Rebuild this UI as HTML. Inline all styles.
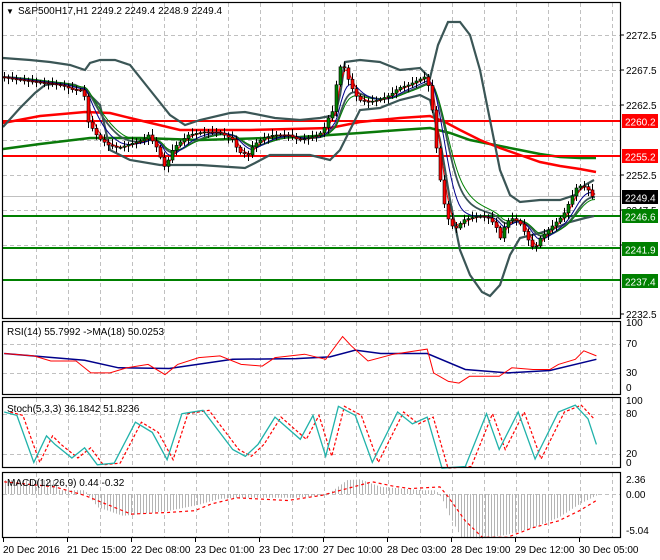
<!DOCTYPE html>
<html><head><meta charset="utf-8">
<style>
html,body{margin:0;padding:0;background:#fff;}
svg{display:block;font-family:"Liberation Sans",sans-serif;}
</style></head>
<body>
<svg id="c" width="660" height="560" xmlns="http://www.w3.org/2000/svg">
<rect width="660" height="560" fill="#fff"/>
<g id="grid" stroke="#c0c0c0" stroke-dasharray="4,3" stroke-width="1"></g>
<g id="main"></g>
<g fill="none" stroke="#000" stroke-width="1.2">
<rect x="2.5" y="2.5" width="618" height="316"/>
<rect x="2.5" y="321.5" width="618" height="73"/>
<rect x="2.5" y="397.5" width="618" height="70"/>
<rect x="2.5" y="472.5" width="618" height="65"/>
</g>
<g id="axes" font-size="10" fill="#000"></g>
<g font-size="10" fill="#000">
<text x="6" y="14" font-size="8">▼</text>
<text x="18" y="14">S&amp;P500H17,H1  2249.2 2249.4 2248.9 2249.4</text>
<text x="7" y="335">RSI(14) 55.7992  -&gt;MA(18) 50.0253</text>
<text x="7" y="412">Stoch(5,3,3) 36.1842 51.8236</text>
<text x="7" y="486">MACD(12,26,9) 0.44 -0.32</text>
</g>
</svg>
<script>
const NS="http://www.w3.org/2000/svg";
function el(p,t,a,txt){const e=document.createElementNS(NS,t);for(const k in a)e.setAttribute(k,a[k]);if(txt!==undefined)e.textContent=txt;p.appendChild(e);return e;}
const g=document.getElementById('grid'),m=document.getElementById('main'),ax=document.getElementById('axes');
for(let x=36;x<620;x+=32){[[3,318],[322,394],[398,467],[473,537]].forEach(r=>el(g,'line',{x1:x+.5,x2:x+.5,y1:r[0],y2:r[1]}));}
[35,70,105,140,175,210,245,279].forEach(y=>el(g,'line',{x1:3,x2:620,y1:y+.5,y2:y+.5}));
[344,373].forEach(y=>el(g,'line',{x1:3,x2:620,y1:y+.5,y2:y+.5}));
[414,454].forEach(y=>el(g,'line',{x1:3,x2:620,y1:y+.5,y2:y+.5}));
el(g,'line',{x1:3,x2:620,y1:494.5,y2:494.5});
function interp(pts,x){for(let i=0;i<pts.length-1;i++){if(x>=pts[i][0]&&x<=pts[i+1][0]){const t=(x-pts[i][0])/(pts[i+1][0]-pts[i][0]||1);return pts[i][1]+t*(pts[i+1][1]-pts[i][1]);}}return pts[pts.length-1][1];}
function pl(p,pts,a){a.points=pts.map(q=>q.join(',')).join(' ');a.fill='none';return el(p,'polyline',a);}
function Z(pts,oy){return pts.map(q=>[+(q[0]/2.364).toFixed(1),+(oy+q[1]/2.94).toFixed(1)]);}
const price=[[3,77],[15,79],[30,81],[45,83],[55,84],[65,86],[75,90],[85,90],[90,122],[100,138],[110,145],[120,148],[135,143],[145,140],[150,135],[160,150],[165,168],[170,160],[175,148],[190,135],[205,132],[220,132],[235,140],[240,152],[250,155],[255,145],[265,138],[275,135],[290,135],[300,140],[310,138],[320,135],[325,130],[330,118],[335,110],[340,68],[345,65],[352,85],[360,100],[370,102],[380,100],[392,95],[400,88],[410,85],[420,80],[428,76],[433,100],[437,140],[442,180],[447,210],[452,225],[458,228],[465,220],[472,218],[480,216],[490,218],[497,225],[502,238],[508,222],[515,218],[523,225],[530,240],[536,250],[542,238],[550,230],[558,222],[565,215],[572,200],[578,188],[584,185],[590,190],[595,198]];
function lag(pts,k){const out=[];let v=pts[0][1];for(let x=3;x<=596;x+=2){const y=interp(pts,x);v=v+(y-v)*k;out.push([x,+v.toFixed(1)]);}return out;}
const up=[[3,58],[30,60],[50,62],[70,65],[85,70],[90,63],[100,60],[115,60],[130,65],[150,90],[170,115],[185,125],[200,120],[230,113],[245,112],[275,118],[300,120],[320,118],[335,115],[340,95],[345,62],[360,60],[380,62],[400,70],[420,68],[430,78],[438,45],[448,22],[460,22],[470,35],[480,70],[490,120],[500,170],[510,195],[520,202],[540,200],[560,200],[575,195],[585,185],[594,180]];
const lo=[[3,127],[20,108],[35,93],[45,85],[60,83],[75,85],[85,90],[100,105],[110,150],[130,160],[160,165],[200,165],[230,167],[245,168],[255,163],[270,155],[310,155],[330,160],[340,150],[360,110],[380,108],[400,100],[420,95],[430,100],[440,140],[450,200],[460,250],[470,275],[482,292],[490,296],[500,285],[510,255],[520,238],[540,233],[555,228],[570,222],[585,218],[594,216]];
const red=[[3,123],[40,116],[85,112],[110,113],[130,118],[180,130],[250,130],[330,128],[360,122],[400,118],[430,116],[445,122],[460,130],[480,140],[500,148],[520,155],[540,162],[560,166],[580,169],[596,172]];
const grn=[[3,149],[40,144],[90,138],[140,138],[200,140],[300,137],[360,133],[400,130],[430,128],[450,133],[470,140],[500,146],[520,150],[540,154],[560,157],[580,158],[596,158]];
pl(m,grn,{stroke:'#0a7a0a','stroke-width':2.5});
pl(m,red,{stroke:'#ff0000','stroke-width':2.5});
[[121,'#ff0000'],[156,'#ff0000'],[216,'#008000'],[248,'#008000'],[280,'#008000']].forEach(l=>el(m,'line',{x1:3,x2:621,y1:l[0],y2:l[0],stroke:l[1],'stroke-width':2}));
el(m,'line',{x1:3,x2:621,y1:196.5,y2:196.5,stroke:'#c0c0c0'});
pl(m,up,{stroke:'#3b5656','stroke-width':2.2});
pl(m,lo,{stroke:'#3b5656','stroke-width':2.2});
pl(m,lag(price,0.12),{stroke:'#3b5656','stroke-width':1.8});
pl(m,lag(price,0.1),{stroke:'#008000','stroke-width':1});
pl(m,lag(price,0.18),{stroke:'#00008b','stroke-width':1});
pl(m,lag(price,0.45),{stroke:'#ff0000','stroke-width':1});
let prev=interp(price,3);
for(let x=4;x<=594;x+=4){const c=interp(price,x+2),o=prev;const hi=Math.min(o,c)-2-((x*7)%5),lw=Math.max(o,c)+2+((x*3)%5);
el(m,'line',{x1:x+.5,x2:x+.5,y1:hi,y2:lw,stroke:'#000'});
const top=Math.min(o,c),h=Math.max(1,Math.abs(o-c));
el(m,'rect',{x:x-1,y:top,width:3,height:h,fill:c<o?'#008000':'#ff0000',stroke:'#000','stroke-width':.6});prev=c;}
const pl2=[[35,'2272.5'],[70,'2267.5'],[105,'2262.5'],[175,'2252.5'],[210,'2247.5'],[245,'2242.5'],[314,'2232.5']];
pl2.forEach(p=>{el(ax,'line',{x1:620,x2:624,y1:p[0],y2:p[0],stroke:'#000'});el(ax,'text',{x:626,y:p[0]+4},p[1]);});
[[121,'#ff0000','2260.2','#fff'],[156,'#ff0000','2255.2','#fff'],[197,'#000','2249.4','#fff'],[216,'#008000','2246.6','#fff'],[249,'#008000','2241.9','#fff'],[281,'#008000','2237.4','#fff']].forEach(b=>{el(ax,'rect',{x:622,y:b[0]-7,width:36,height:14,fill:b[1]});el(ax,'text',{x:625,y:b[0]+4.5,fill:b[3]},b[2]);});
[[326,'100'],[347,'70'],[376,'30'],[391,'0'],[404,'100'],[417,'80'],[457,'20'],[466,'0'],[483,'2.36'],[498,'0.00'],[534,'-5.04']].forEach(p=>el(ax,'text',{x:626,y:p[0]},p[1]));
['20 Dec 2016','21 Dec 15:00','22 Dec 08:00','23 Dec 01:00','23 Dec 17:00','27 Dec 10:00','28 Dec 03:00','28 Dec 19:00','29 Dec 12:00','30 Dec 05:00'].forEach((t,i)=>{const x=3+64*i;el(ax,'line',{x1:x+.5,x2:x+.5,y1:537,y2:542,stroke:'#000'});el(ax,'text',{x:x,y:553},t);});
const rsiR=Z([[10,128],[80,135],[120,150],[180,150],[215,185],[260,185],[300,170],[350,160],[390,190],[420,160],[470,140],[520,135],[570,160],[620,165],[650,140],[720,130],[770,145],[810,78],[830,105],[870,150],[930,130],[1010,115],[1025,185],[1060,210],[1085,215],[1110,195],[1180,195],[1210,170],[1260,175],[1300,175],[1320,160],[1360,145],[1380,120],[1410,135]],310);
const rsiB=Z([[10,128],[200,148],[280,170],[400,172],[550,145],[700,143],[780,138],[840,118],[900,128],[1010,128],[1100,175],[1200,185],[1300,178],[1410,145]],310);
pl(m,rsiB,{stroke:'#00008b','stroke-width':1.5});
pl(m,rsiR,{stroke:'#ff0000','stroke-width':1});
const st=[[10,300],[40,310],[80,448],[110,370],[130,395],[170,435],[200,405],[230,455],[270,450],[320,330],[360,360],[395,440],[430,305],[480,295],[550,410],[580,430],[610,395],[650,315],[710,380],[740,310],[770,430],[800,283],[840,310],[880,448],[940,300],[975,335],[1010,315],[1045,465],[1100,460],[1150,305],[1180,410],[1225,300],[1265,438],[1320,300],[1360,280],[1390,320],[1410,395]];
const sT=Z(st,310);
const sR=sT.map(q=>[q[0]+6,q[1]]);
pl(m,sR.filter(q=>q[0]<598),{stroke:'#ff0000','stroke-width':1.2,'stroke-dasharray':'3,2'});
pl(m,sT,{stroke:'#20b2aa','stroke-width':1.3});
const hist=Z([[10,500],[130,500],[140,530],[200,530],[230,580],[290,605],[330,600],[400,590],[460,575],[520,555],[560,552],[700,552],[770,545],[820,500],[850,498],[900,520],[1000,530],[1030,530],[1045,555],[1060,600],[1090,670],[1140,672],[1200,660],[1260,640],[1320,610],[1370,570],[1410,545]],310);
const zero=494;
let d='';for(let x=5;x<=596;x+=3){const y=interp(hist,x);d+=`M${x+.5} ${zero}V${y.toFixed(1)}`;}
el(m,'path',{d:d,stroke:'#b4b4b4','stroke-width':1,fill:'none'});
const sig=Z([[10,505],[130,520],[200,545],[260,575],[310,600],[400,595],[460,590],[500,570],[560,552],[680,560],[760,545],[820,525],[880,505],[930,518],[970,525],[1040,520],[1060,550],[1100,620],[1140,668],[1200,668],[1260,640],[1320,620],[1370,590],[1410,560]],310);
pl(m,sig,{stroke:'#ff0000','stroke-width':1.2,'stroke-dasharray':'3,3'});
</script>
</body></html>
